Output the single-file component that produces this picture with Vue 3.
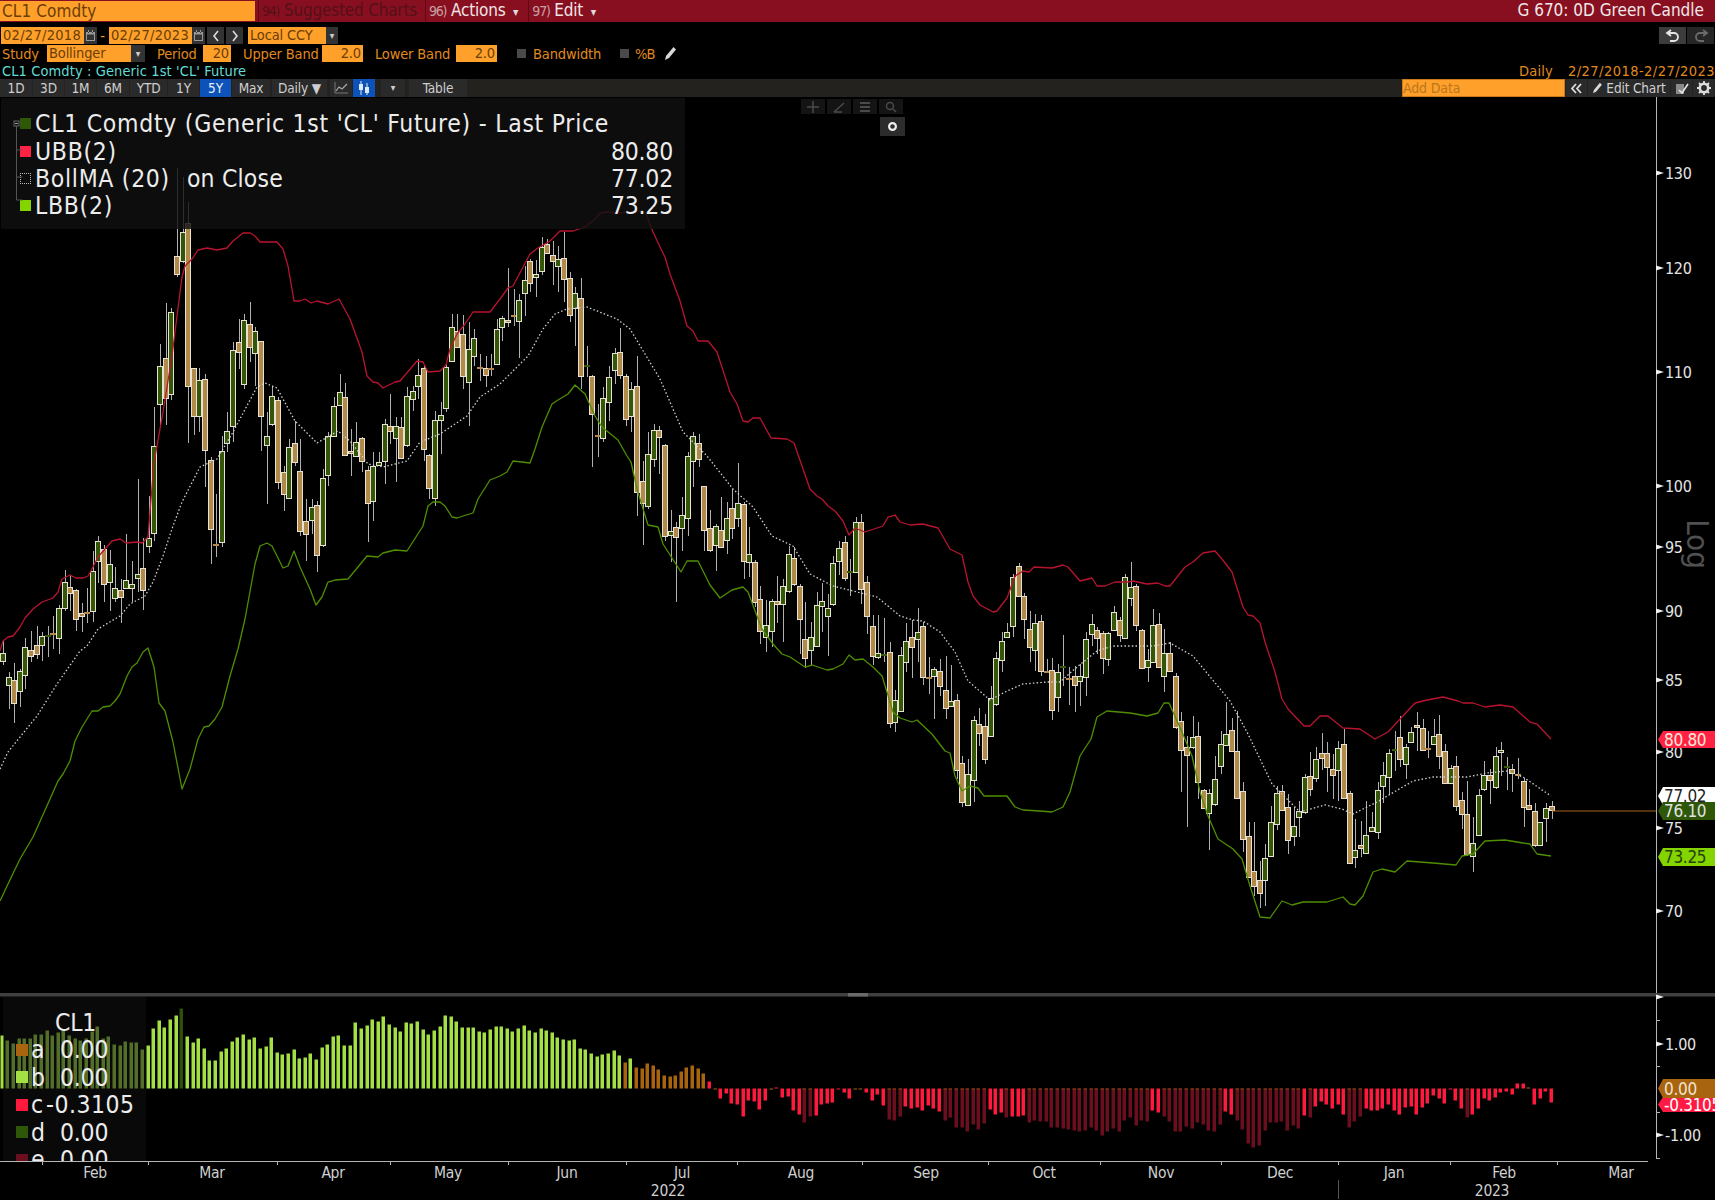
<script setup>
const candleRaw = `g654 662 642 666,g678 686 673 710,b681 704 664 724,g672 692 670 708,g648 676 639 690,b651 657 632 663,b646 655 627 660,g637 646 633 662,g636 637 627 658,b634 635 617 650,g609 639 606 655,g583 609 571 612,b588 594 577 612,b591 620 590 632,b614 617 604 633,b613 614 589 624,g572 612 552 623,g542 562 537 584,b550 585 546 603,g565 583 551 612,g589 599 568 603,b591 598 580 624,g581 589 535 590,g585 589 562 603,g575 579 480 593,b569 591 539 611,g539 547 497 554,g447 534 408 542,g367 405 345 426,b359 399 304 426,g313 395 309 401,b257 275 169 278,g233 262 178 264,b224 387 203 444,b369 417 369 436,g381 417 369 433,b380 451 375 488,b461 530 458 565,b545 546 495 558,g452 543 437 548,g432 444 413 453,g351 427 343 443,b343 353 320 370,g321 385 315 390,b325 348 303 363,g332 354 328 387,b342 417 342 452,g437 446 413 505,g397 425 387 427,b401 483 398 490,b473 495 467 512,g448 499 440 500,b444 463 422 467,b472 532 440 537,b522 535 500 562,g508 521 500 535,b506 556 502 573,g479 546 470 548,g437 476 433 487,g407 437 398 438,g393 406 375 407,b398 456 384 457,b452 454 430 477,g443 457 423 458,b439 462 438 473,b471 504 467 543,g467 502 453 522,g463 466 453 467,g425 462 420 485,b427 432 395 445,g427 439 418 483,b428 459 418 459,g397 446 388 448,g392 400 387 412,g376 387 360 400,b369 450 367 462,b456 489 455 500,g421 499 412 507,g416 421 403 455,g368 409 363 413,g328 362 315 363,b332 348 315 348,b335 377 316 390,g350 383 323 427,g339 357 330 367,b368 369 355 382,b369 376 357 388,b369 370 355 377,g330 365 320 365,g319 328 317 342,b321 323 269 328,b316 317 290 327,g301 322 295 359,g281 294 267 317,b262 284 260 293,g275 278 261 298,g248 272 238 276,b245 254 240 255,b256 262 242 286,g260 267 247 293,b259 280 233 303,b279 316 273 323,g294 309 288 347,b299 377 279 390,g366 367 347 378,b377 415 376 468,b436 437 405 458,g399 439 388 443,g378 403 367 422,g354 371 349 385,b353 376 329 380,b377 420 375 427,g390 417 383 433,b387 493 357 517,b482 504 462 546,g455 507 433 510,g431 460 425 468,b431 438 427 475,b446 537 445 542,g532 536 511 563,b528 538 523 603,g516 529 498 552,g457 519 453 537,g437 462 433 488,b444 460 435 468,b487 531 487 552,b529 551 511 553,g527 546 525 572,b531 548 498 549,g519 541 503 555,b509 529 490 540,g504 519 464 528,b505 562 503 580,g555 563 528 578,b563 603 561 608,b600 632 587 645,g626 638 601 653,g602 632 600 648,b602 605 577 624,g587 605 580 643,g555 592 547 594,b559 585 548 587,b587 620 585 655,b640 659 603 669,g638 651 623 667,g606 647 593 647,g602 607 584 633,g609 617 595 657,g564 605 557 607,g549 562 542 576,b543 579 537 582,g572 573 560 597,g523 573 518 573,b523 590 515 605,b583 617 577 635,b627 657 616 666,g654 658 616 660,g655 656 619 663,b653 724 643 729,g701 723 691 733,g656 712 648 712,g642 663 624 673,b638 648 621 679,g633 640 609 663,b627 678 623 686,b678 679 658 695,g670 677 668 720,b672 687 660 697,b691 709 657 720,g702 707 666 708,b701 771 695 780,b764 803 757 808,g775 806 760 807,g721 781 717 803,b725 734 709 747,b727 760 715 765,g699 737 687 738,g659 705 653 707,g642 661 633 673,g633 638 624 638,g578 627 575 638,b567 597 564 597,b597 620 594 640,b630 648 612 663,g624 651 615 672,b622 672 616 677,b672 673 660 673,b671 711 659 721,g673 698 665 713,g667 668 636 687,b679 680 668 706,b677 686 667 713,g677 682 665 707,g640 678 633 697,g625 635 615 647,b631 639 628 655,b634 659 632 675,g634 660 633 667,g613 631 607 632,b621 636 618 643,g578 639 575 640,g588 599 563 607,b587 626 585 632,b631 669 630 670,g661 668 650 683,g626 663 610 663,b625 668 614 668,g654 677 630 693,b654 672 643 673,b677 728 674 730,b722 751 713 793,b748 756 737 828,g738 748 717 750,b737 783 723 800,b791 809 790 810,g794 814 790 851,g780 805 757 807,g745 767 732 775,g735 746 703 747,b731 752 719 753,b752 799 712 800,b792 840 783 853,b837 878 823 878,b872 887 823 897,b881 894 862 909,g859 881 845 907,g823 857 807 857,g794 825 787 831,b792 811 786 812,b808 841 795 855,g827 837 808 847,g812 818 802 838,g778 813 775 815,b777 790 753 797,g760 779 748 783,b754 759 734 771,b754 768 743 793,b770 776 755 800,g749 771 742 802,b745 799 730 800,b794 864 792 865,g851 858 820 869,b846 849 822 858,g836 854 802 855,g828 832 813 833,g791 833 783 840,g776 787 763 804,g754 778 750 796,g750 751 732 772,b738 760 717 768,g748 765 745 780,g733 743 728 744,b726 728 713 752,b729 751 720 752,b749 750 732 759,g737 745 720 745,b735 757 716 770,b752 784 745 785,g769 784 766 785,b767 807 757 812,b801 815 793 830,b815 855 782 857,g844 857 818 873,g796 836 790 837,g776 790 762 792,b776 781 770 805,g757 788 748 790,g751 753 743 777,g767 768 758 791,b770 774 765 793,b775 776 759 780,b782 808 779 828,b806 810 790 811,b812 846 804 848,g823 846 823 847,g809 819 804 843,b807 811 802 820`

const stepX = 5.611
const candles = candleRaw.split(',').map((s, i) => {
  const [t, b, wt, wb] = s.slice(1).split(' ').map(Number)
  const x = Math.round(3 + i * stepX)
  return { key: i, x, green: s[0] === 'g', t, b, wt, wb, dash: b - t <= 1.5 }
})

const ubb = '0,652 3,642 8,638 13,637 20,628 25,619 33,610 42,603 53,599 58,593 62,580 70,576 76,579 83,579 88,577 93,568 98,558 105,550 112,542 120,540 126,544 137,543 142,544 148,538 154,463 157,447 163,413 172,357 177,317 182,278 185,267 192,260 198,251 207,249 217,251 227,249 233,242 243,234 250,234 255,237 260,243 277,243 283,250 288,267 294,302 300,302 305,300 311,304 317,302 328,305 339,300 350,320 362,353 367,377 373,383 378,384 383,389 395,383 400,382 417,362 423,363 428,373 440,372 446,366 450,350 457,335 465,325 473,313 490,313 500,300 508,289 513,287 522,270 530,255 538,249 550,242 560,232 573,232 585,228 595,220 600,214 607,213 620,214 640,212 646,214 648,220 653,233 660,248 665,258 670,275 680,302 687,327 693,332 698,342 708,342 717,353 730,393 737,405 743,422 748,423 753,419 760,419 771,439 787,440 794,444 802,467 810,490 817,497 822,500 828,507 835,512 843,522 849,536 855,529 865,533 883,527 888,518 895,516 900,523 910,526 923,525 938,529 950,550 962,556 968,583 973,597 980,606 993,613 997,612 1007,599 1015,577 1023,572 1029,573 1034,568 1052,569 1063,566 1068,568 1080,582 1092,579 1097,587 1105,587 1115,583 1128,583 1133,582 1147,585 1158,584 1165,587 1170,587 1185,568 1193,563 1203,554 1215,552 1222,560 1232,573 1243,608 1248,616 1253,617 1260,624 1265,643 1275,673 1282,700 1288,710 1304,727 1310,727 1320,717 1328,717 1343,729 1360,730 1375,740 1388,733 1415,704 1427,701 1443,698 1458,702 1463,704 1473,704 1485,708 1500,706 1513,708 1530,723 1537,725 1551,740'
const lbb = '0,902 8,885 20,860 33,838 50,800 58,782 63,775 70,762 75,742 82,728 92,712 98,712 103,708 110,707 115,702 120,695 127,677 132,668 137,664 143,653 148,649 154,668 159,704 165,712 173,743 182,790 190,770 198,740 204,728 209,727 215,720 222,708 230,677 238,650 245,620 255,565 260,547 267,544 272,547 283,569 288,567 294,552 300,568 310,590 316,606 322,598 328,583 335,581 348,580 358,568 367,557 378,558 383,554 395,551 407,552 423,527 428,507 433,503 440,503 445,507 452,518 457,519 463,517 473,514 478,500 490,481 500,477 507,473 513,462 530,464 535,450 542,428 552,405 558,401 568,395 575,386 585,395 595,417 602,428 618,441 627,457 631,463 637,490 648,526 658,528 663,545 681,573 687,562 698,562 710,586 720,599 732,591 743,588 748,593 757,617 762,630 773,645 782,655 790,658 805,668 812,666 827,671 833,670 843,665 849,656 855,661 863,660 873,668 882,677 887,693 893,713 900,719 912,723 917,721 932,735 945,752 950,754 955,777 962,792 970,787 978,789 984,797 1007,797 1015,808 1023,811 1040,812 1052,813 1063,808 1070,793 1080,757 1091,740 1097,718 1107,712 1130,714 1147,717 1158,714 1164,704 1169,704 1182,733 1192,757 1200,793 1208,817 1218,840 1233,850 1242,860 1250,887 1260,918 1270,919 1282,902 1292,906 1303,903 1327,903 1343,898 1350,905 1355,906 1363,897 1373,873 1382,870 1395,873 1407,862 1433,864 1456,866 1462,857 1473,855 1485,842 1505,841 1523,844 1530,845 1537,855 1551,857'
const boll = '0,770 8,753 37,717 57,685 80,652 87,647 98,630 120,617 130,605 145,597 153,583 163,557 173,527 182,503 200,468 217,460 233,433 257,388 265,384 277,389 295,422 317,444 338,432 350,442 368,465 383,468 407,462 420,443 440,435 467,417 480,398 500,385 528,357 543,330 555,315 567,310 587,308 617,320 630,330 660,380 683,433 707,457 733,490 753,508 772,537 793,547 810,575 833,587 877,598 900,617 913,621 923,622 940,633 955,653 968,682 990,701 1007,692 1023,685 1047,683 1060,683 1077,668 1097,652 1113,647 1153,647 1170,644 1193,657 1230,702 1247,733 1272,785 1300,813 1325,806 1342,810 1353,815 1377,803 1413,782 1433,778 1467,778 1487,774 1507,772 1523,778 1551,797'

const histVals = [53,48,45,50,50,50,54,54,58,53,56,58,53,50,48,50,57,62,50,52,44,43,47,46,46,39,43,60,68,61,69,73,80,52,46,50,40,28,28,37,40,47,51,54,49,51,40,42,51,36,34,35,39,30,31,35,29,41,44,52,53,43,43,66,60,63,69,67,72,64,61,57,66,65,67,59,54,58,62,73,72,67,61,61,61,57,56,59,62,62,60,57,60,63,58,56,60,58,56,51,49,48,49,40,39,35,32,34,35,38,33,26,30,21,20,25,23,19,13,12,13,17,21,23,20,15,7,-1,-10,-5,-15,-16,-28,-12,-13,-21,-12,-1,1,-9,-8,-22,-26,-34,-28,-27,-16,-15,-14,-1,-4,-10,-1,-1,-4,-12,-6,-17,-31,-32,-28,-18,-20,-19,-22,-17,-20,-23,-32,-29,-39,-39,-43,-36,-41,-35,-21,-26,-24,-29,-28,-28,-27,-34,-32,-33,-33,-39,-39,-40,-41,-42,-43,-42,-39,-42,-47,-43,-40,-43,-32,-29,-37,-32,-33,-22,-24,-28,-33,-43,-43,-38,-40,-34,-36,-42,-43,-36,-23,-26,-32,-41,-55,-59,-57,-42,-34,-34,-33,-42,-37,-40,-27,-29,-18,-13,-16,-20,-16,-26,-39,-33,-28,-20,-22,-22,-20,-16,-22,-26,-19,-18,-26,-19,-15,-7,-10,-15,-1,-12,-20,-29,-26,-20,-10,-12,-9,-4,-3,-6,5,5,0,-16,-10,-3,-14]
const darkRanges = [[143,144],[158,160],[168,175],[179,179],[183,204],[207,217],[220,231],[233,233],[240,242],[261,261]]
const isDark = (i) => darkRanges.some(([a, b]) => i >= a && i <= b)
const base = 1089.5
const hist = histVals.map((v, i) => {
  let color = '#a3df45'
  if (i === 32) color = '#2e4f08'
  else if (i === 111 || (i >= 113 && i <= 125)) color = '#a9640f'
  else if (i >= 126) {
    if (isDark(i)) color = '#6b0e1e'
    else if (Math.abs(v) <= 1 && i !== 138 && i !== 149 && i !== 258) color = '#a9640f'
    else color = '#ff1a3d'
  }
  const h = Math.max(Math.abs(v), 1)
  return {
    key: i,
    x: Math.round(1.7 + i * 5.613) - 1.5,
    y: v >= 0 ? base - h : base,
    h,
    color,
    cap: isDark(i),
  }
})

const priceLabels = [
  ['130', 174], ['120', 269], ['110', 373], ['100', 487], ['95', 548], ['90', 612],
  ['85', 681], ['80', 753], ['75', 829], ['70', 912],
]
const lowerLabels = [['1.00', 1045], ['-1.00', 1136]]
const majorTicks = [174, 269, 373, 487, 548, 612, 681, 753, 829, 912, 998, 1045, 1136]
const minorTicks = [1021, 1067, 1113, 1159]
const xTicks = [42, 148, 277, 390, 508, 626, 737, 862, 988, 1100, 1221, 1338, 1450, 1557]
const months = [
  ['Feb', 95], ['Mar', 212], ['Apr', 333], ['May', 448], ['Jun', 567], ['Jul', 682],
  ['Aug', 801], ['Sep', 926], ['Oct', 1044], ['Nov', 1161], ['Dec', 1280], ['Jan', 1394],
  ['Feb', 1504], ['Mar', 1621],
]
const tags = [
  { text: '80.80', top: 732, h: 17, bg: '#ff2244', fg: '#ffe9d8' },
  { text: '77.02', top: 788, h: 18, bg: '#ffffff', fg: '#222' },
  { text: '73.25', top: 849, h: 18, bg: '#84d400', fg: '#27410a' },
  { text: '76.10', top: 803, h: 18, bg: '#2f5708', fg: '#e3e3e3' },
  { text: '-0.3105', top: 1098, h: 15, bg: '#ff1a44', fg: '#fff' },
  { text: '0.00', top: 1080, h: 19, bg: '#a9640f', fg: '#f0e4d0' },
]
const tagPoints = (t) => {
  const m = t.top + t.h / 2
  return `1658,${m} 1663,${t.top} 1715,${t.top} 1715,${t.top + t.h} 1663,${t.top + t.h}`
}
const tools = [
  { t: '1D', w: 32 }, { t: '3D', w: 31 }, { t: '1M', w: 31 }, { t: '6M', w: 32 },
  { t: 'YTD', w: 37 }, { t: '1Y', w: 31 }, { t: '5Y', w: 31, on: true }, { t: 'Max', w: 38 },
]
const lowerRows = [
  { k: 'a', v: '0.00', c: '#a9640f' },
  { k: 'b', v: '0.00', c: '#a3df45' },
  { k: 'c', v: '-0.3105', c: '#ff1a3d', neg: true },
  { k: 'd', v: '0.00', c: '#2f5708' },
  { k: 'e', v: '0.00', c: '#6b0e1e' },
]
</script>

<template>
  <div class="page">
    <header class="titlebar">
      <div class="security">CL1 Comdty</div>
      <div class="menu dim"><i>94)</i> Suggested Charts</div>
      <div class="menu"><i>96)</i> Actions <b>▾</b></div>
      <div class="menu"><i>97)</i> Edit <b>▾</b></div>
      <div class="spacer"></div>
      <div class="page-name">G 670: 0D Green Candle</div>
    </header>

    <div class="row row-dates">
      <span class="input date">02/27/2018</span>
      <span class="cal"><svg width="9" height="11" viewBox="0 0 9 11"><path d="M0 2h9v9H0z M1 4.5v5.5h7V4.5z M2 0h1v3H2z M6 0h1v3H6z" fill="#9a9a9a" fill-rule="evenodd"/></svg></span>
      <span class="dash">-</span>
      <span class="input date">02/27/2023</span>
      <span class="cal"><svg width="9" height="11" viewBox="0 0 9 11"><path d="M0 2h9v9H0z M1 4.5v5.5h7V4.5z M2 0h1v3H2z M6 0h1v3H6z" fill="#9a9a9a" fill-rule="evenodd"/></svg></span>
      <span class="nav"><svg width="8" height="12" viewBox="0 0 8 12"><path d="M6 1 2 6l4 5" fill="none" stroke="#ddd" stroke-width="1.6"/></svg></span>
      <span class="nav"><svg width="8" height="12" viewBox="0 0 8 12"><path d="M2 1l4 5-4 5" fill="none" stroke="#ddd" stroke-width="1.6"/></svg></span>
      <span class="input ccy">Local CCY</span>
      <span class="drop">▾</span>
      <span class="spacer"></span>
      <span class="undo"><svg width="16" height="14" viewBox="0 0 16 14"><path d="M6 1 2 4l4 3M2 4h7a4 4 0 0 1 0 8H5" fill="none" stroke="#e6e6e6" stroke-width="1.8"/></svg></span>
      <span class="undo off"><svg width="16" height="14" viewBox="0 0 16 14"><path d="M10 1l4 3-4 3M14 4H7a4 4 0 0 0 0 8h4" fill="none" stroke="#6a6a6a" stroke-width="1.8"/></svg></span>
    </div>

    <div class="row row-study">
      <span class="lbl study">Study</span>
      <span class="input boll">Bollinger</span>
      <span class="drop study-drop">▾</span>
      <span class="lbl period">Period</span>
      <span class="input num n20">20</span>
      <span class="lbl upper">Upper Band</span>
      <span class="input num n2">2.0</span>
      <span class="lbl lower">Lower Band</span>
      <span class="input num n2">2.0</span>
      <span class="check first"></span>
      <span class="lbl">Bandwidth</span>
      <span class="check second"></span>
      <span class="lbl pct">%B</span>
      <svg class="pencil" width="13" height="15" viewBox="0 0 13 15"><path d="M9.5 1 12 3.5 5 12 1 14l1-4z" fill="#d8d8d8"/></svg>
    </div>

    <div class="row row-info">
      <span class="cyan">CL1 Comdty : Generic 1st 'CL' Future</span>
      <span class="spacer"></span>
      <span class="info-r daily">Daily</span>
      <span class="info-r range">2/27/2018-2/27/2023</span>
    </div>

    <div class="toolbar">
      <span v-for="b in tools" :key="b.t" class="tbtn" :class="{ on: b.on }" :style="{ width: b.w + 'px' }">{{ b.t }}</span>
      <span class="tbtn daily-btn">Daily ▼</span>
      <span class="tbtn icon-btn line-btn"><svg width="14" height="12" viewBox="0 0 14 12"><path d="M1 0v11h13" fill="none" stroke="#777" stroke-width="1"/><path d="M2 9l3-4 3 2 5-5" fill="none" stroke="#aaa" stroke-width="1.2"/></svg></span>
      <span class="tbtn icon-btn active"><svg width="14" height="14" viewBox="0 0 14 14"><path d="M4 0v14M10 2v12" stroke="#dfe8f5" stroke-width="1"/><rect x="2" y="3" width="4" height="6" fill="#dfe8f5"/><rect x="8" y="6" width="4" height="6" fill="#dfe8f5"/></svg></span>
      <span class="tbtn chart-drop">▾</span>
      <span class="tbtn table-btn">Table</span>
      <span class="spacer"></span>
      <span class="add-data">Add Data</span>
      <span class="tbtn collapse"><svg width="13" height="11" viewBox="0 0 13 11"><path d="M6 1 2 5.5 6 10M11 1 7 5.5 11 10" fill="none" stroke="#ddd" stroke-width="1.8"/></svg></span>
      <span class="tbtn edit-chart"><svg width="11" height="12" viewBox="0 0 13 15"><path d="M9.5 1 12 3.5 5 12 1 14l1-4z" fill="#d8d8d8"/></svg>Edit Chart</span>
      <span class="tbtn square"><svg width="14" height="13" viewBox="0 0 14 13"><path d="M1 2h8v10H1z" fill="#8a8a8a"/><path d="M4 8l3 3 6-9" fill="none" stroke="#e6e6e6" stroke-width="1.6"/></svg></span>
      <span class="tbtn square"><svg width="14" height="14" viewBox="0 0 14 14"><circle cx="7" cy="7" r="4.2" fill="none" stroke="#ddd" stroke-width="2.6"/><path d="M7 0v3M7 11v3M0 7h3M11 7h3M2 2l2 2M10 10l2 2M2 12l2-2M10 4l2-2" stroke="#ddd" stroke-width="1.8"/></svg></span>
    </div>

    <main class="chart">
      <svg class="plot" width="1715" height="1102" viewBox="0 98 1715 1102">
        <!-- candles -->
        <g v-for="c in candles" :key="c.key">
          <line :x1="c.x + 0.5" :x2="c.x + 0.5" :y1="c.wt" :y2="c.wb" class="wick" />
          <rect v-if="c.dash" :x="c.x - 3" :y="c.t" width="6" height="2" :fill="c.green ? '#355a08' : '#b5894a'" />
          <rect v-else :x="c.x - 2.5" :y="c.t + 0.5" width="5" :height="c.b - c.t" :fill="c.green ? '#335707' : '#b18a4a'" class="body" />
        </g>
        <polyline :points="ubb" class="ln-ubb" />
        <polyline :points="lbb" class="ln-lbb" />
        <polyline :points="boll" class="ln-boll" />
        <line x1="1552" x2="1656" y1="812" y2="812" class="ln-last" />

        <!-- histogram -->
        <rect v-for="b in hist" :key="b.key" :x="b.x" :y="b.y" width="3.5" :height="b.h" :fill="b.color" />
        <g v-for="b in hist" :key="'c' + b.key">
          <rect v-if="b.cap" :x="b.x" :y="base" width="3.5" height="1" fill="#8a4a10" />
        </g>

        <!-- panel divider and axes -->
        <rect x="0" y="994" width="1715" height="3.5" fill="#404040" />
        <rect x="848" y="994" width="20" height="3.5" fill="#6a6a6a" />
        <line x1="1656.5" x2="1656.5" y1="98" y2="994" class="axis" />
        <line x1="1656.5" x2="1656.5" y1="997" y2="1159" class="axis" />
        <line x1="0" x2="1648" y1="1162.5" y2="1162.5" class="axis" />
        <line v-for="x in xTicks" :key="x" :x1="x + 0.5" :x2="x + 0.5" y1="1162" y2="1166" class="axis" />
        <line x1="1338.5" x2="1338.5" y1="1181" y2="1200" class="sep" />
        <polygon v-for="y in majorTicks" :key="y" :points="`1656,${y - 2.5} 1664,${y} 1656,${y + 2.5}`" fill="#eee" />
        <line v-for="y in minorTicks" :key="y" x1="1656" x2="1660" :y1="y + 0.5" :y2="y + 0.5" class="axis" />

        <text v-for="l in priceLabels" :key="l[0]" x="1665" :y="l[1] + 6" class="ax">{{ l[0] }}</text>
        <text v-for="l in lowerLabels" :key="l[0]" x="1665" :y="l[1] + 6" class="ax">{{ l[0] }}</text>
        <text v-for="(m, i) in months" :key="i" :x="m[1]" y="1179" text-anchor="middle" class="ax mon">{{ m[0] }}</text>
        <text x="668" y="1197" text-anchor="middle" class="ax mon">2022</text>
        <text x="1492" y="1197" text-anchor="middle" class="ax mon">2023</text>
        <text class="log" transform="translate(1687 545) rotate(90)" text-anchor="middle">Log</text>

        <g v-for="t in tags" :key="t.text">
          <polygon :points="tagPoints(t)" :fill="t.bg" />
          <text x="1664" :y="t.top + t.h / 2 + 6" :fill="t.fg" class="tag">{{ t.text }}</text>
        </g>
      </svg>

      <div class="legend">
        <svg class="tree" width="20" height="100" viewBox="0 0 20 100"><path d="M7.5 14V90M7.5 40h6M7.5 67h6M7.5 90h6" fill="none" stroke="#555"/><rect x="5" y="11" width="5" height="5" fill="#111" stroke="#666"/><path d="M6 13.5h3" stroke="#999"/></svg>
        <div class="lg-row title"><span class="sw" style="background:#2f5708"></span>CL1 Comdty (Generic 1st 'CL' Future) - Last Price</div>
        <div class="lg-row"><span class="sw" style="background:#ff2244"></span>UBB(2)<span class="val">80.80</span></div>
        <div class="lg-row"><span class="sw dotted"></span>BollMA (20)<span class="on-close">on Close</span><span class="val">77.02</span></div>
        <div class="lg-row"><span class="sw" style="background:#84d400"></span>LBB(2)<span class="val">73.25</span></div>
      </div>

      <div class="mini-tools">
        <span><svg width="12" height="12" viewBox="0 0 12 12"><path d="M6 0v12M0 6h12" stroke="#4a4a4a" stroke-width="1.5"/></svg></span>
        <span><svg width="12" height="12" viewBox="0 0 12 12"><path d="M1 11 11 2M1 11h8" stroke="#4a4a4a" stroke-width="1.5" fill="none"/></svg></span>
        <span><svg width="12" height="12" viewBox="0 0 12 12"><path d="M1 2h10M1 6h10M1 10h10" stroke="#4a4a4a" stroke-width="2"/></svg></span>
        <span><svg width="12" height="12" viewBox="0 0 12 12"><circle cx="5" cy="5" r="3.5" fill="none" stroke="#4a4a4a" stroke-width="1.5"/><path d="M8 8l3 3" stroke="#4a4a4a" stroke-width="1.5"/></svg></span>
      </div>
      <div class="cam"><svg width="11" height="11" viewBox="0 0 11 11"><circle cx="5.5" cy="5.5" r="3.4" fill="none" stroke="#eee" stroke-width="2.2"/></svg></div>

      <div class="legend-low">
        <div class="low-name">CL1</div>
        <div v-for="r in lowerRows" :key="r.k" class="low-row">
          <span class="low-sw" :style="{ background: r.c }"></span>
          <span class="low-k">{{ r.k }}</span>
          <span class="low-v" :class="{ neg: r.neg }">{{ r.v }}</span>
        </div>
      </div>
    </main>
  </div>
</template>

<style scoped>
.page {
  width: 1715px;
  height: 1200px;
  background: #000;
  display: flex;
  flex-direction: column;
  overflow: hidden;
  font-family: "DejaVu Sans Condensed", "DejaVu Sans", sans-serif;
  font-stretch: condensed;
  color: #e0e0e0;
}
.spacer { flex: 1; }
.titlebar {
  height: 22px;
  background: #880f20;
  display: flex;
  align-items: stretch;
  font-size: 17px;
  flex: none;
  white-space: nowrap;
}
.security {
  width: 255px;
  box-sizing: border-box;
  background: #ffa02a;
  color: #6a3d05;
  padding-left: 2px;
  line-height: 20px;
  margin: 1px 0;
  letter-spacing: 0.1px;
}
.menu {
  padding: 0 9px 0 3px;
  line-height: 21px;
  color: #f0e6e6;
  border-left: 1px solid #5a0a14;
  letter-spacing: -0.2px;
  margin-right: 1px;
}
.menu i { font-style: normal; color: #c9a0a4; font-size: 14px; letter-spacing: -1.2px; }
.menu b { font-weight: normal; font-size: 12px; color: #ddd; margin-left: 3px; }
.menu.dim {
  width: 166px;
  color: #541019;
  box-sizing: border-box;
  margin-left: 3px;
  overflow: hidden;
}
.menu.dim i { color: #541019; }
.page-name { line-height: 21px; padding-right: 11px; color: #f0e8e8; letter-spacing: 0; }

.row {
  display: flex;
  align-items: center;
  font-size: 14.5px;
  flex: none;
  letter-spacing: -0.15px;
  white-space: nowrap;
}
.row-dates { height: 17px; margin-top: 5px; }
.row-study { height: 17px; margin-top: 1px; }
.row-info { height: 16px; margin-top: 1px; }
.input {
  background: #ffa02a;
  color: #6a3d05;
  line-height: 17px;
  height: 17px;
  box-sizing: border-box;
  display: block;
}
.date { width: 83px; padding-left: 2px; margin-left: 1px; letter-spacing: 0.28px; overflow: hidden; }
.cal {
  width: 13px;
  height: 17px;
  background: #333;
  display: flex;
  align-items: center;
  justify-content: center;
}
.dash { width: 11px; text-align: center; color: #ffa02a; }
.nav {
  width: 17px;
  height: 17px;
  background: #333;
  display: flex;
  align-items: center;
  justify-content: center;
  margin-left: 2px;
}
.ccy { width: 78px; padding-left: 2px; margin-left: 5px; }
.drop {
  width: 12px;
  height: 17px;
  background: #333;
  color: #ccc;
  font-size: 10px;
  line-height: 17px;
  text-align: center;
}
.undo {
  width: 27px;
  height: 17px;
  background: #3c3c3c;
  display: flex;
  align-items: center;
  justify-content: center;
  margin-right: 1px;
}
.undo.off { background: #262626; }
.lbl { color: #e08a1e; }
.study { margin-left: 2px; width: 45px; }
.boll { width: 84px; padding-left: 2px; }
.study-drop { width: 14px; }
.period { margin-left: 12px; width: 46px; }
.num { text-align: right; padding-right: 2px; }
.n20 { width: 28px; }
.upper { margin-left: 12px; width: 79px; }
.n2 { width: 41px; }
.lower { margin-left: 12px; width: 81px; }
.check { width: 9px; height: 9px; background: #4a4a4a; margin-right: 6px; }
.check.first { margin-left: 20px; margin-right: 7px; }
.check.second { margin-left: 19px; }
.pct { letter-spacing: -1px; }
.pencil { margin-left: 10px; }
.cyan { color: #62dcd4; margin-left: 2px; letter-spacing: 0.1px; }
.info-r { color: #e08a1e; }
.daily { margin-right: 15px; letter-spacing: 0.2px; }
.range { letter-spacing: 0.45px; }

.toolbar {
  height: 18px;
  background: #23221e;
  display: flex;
  align-items: stretch;
  font-size: 13.5px;
  flex: none;
  letter-spacing: -0.15px;
  white-space: nowrap;
}
.tbtn {
  background: #2a2a2a;
  color: #cfcfcf;
  margin-right: 1px;
  line-height: 18px;
  text-align: center;
  box-sizing: border-box;
  display: block;
}
.tbtn.on { background: #0c52b8; color: #e6eefa; }
.daily-btn { width: 55px; margin-left: 1px; }
.icon-btn { width: 22px; display: flex; align-items: center; justify-content: center; }
.line-btn { margin-left: 2px; }
.icon-btn.active { background: #0c52b8; }
.chart-drop { width: 24px; margin-left: 5px; font-size: 10px; }
.table-btn { width: 58px; margin-left: 3px; }
.add-data {
  width: 163px;
  box-sizing: border-box;
  background: #ffa02a;
  border: 1px solid #c9781a;
  color: #b9761c;
  line-height: 16px;
  padding-left: 0;
  font-size: 14px;
}
.collapse { width: 21px; margin-left: 1px; display: flex; align-items: center; justify-content: center; }
.edit-chart {
  width: 82px;
  display: flex;
  align-items: center;
  justify-content: center;
  gap: 3px;
}
.square { width: 21px; display: flex; align-items: center; justify-content: center; }

.chart { position: relative; flex: 1; }
.plot { display: block; }
.wick { stroke: #b0b0b0; stroke-width: 1; }
.body { stroke: #e8e2d4; stroke-width: 1; }
.ln-ubb { fill: none; stroke: #b8142f; stroke-width: 1.3; stroke-linejoin: round; }
.ln-lbb { fill: none; stroke: #4f8e00; stroke-width: 1.3; stroke-linejoin: round; }
.ln-boll { fill: none; stroke: #cfcfcf; stroke-width: 1.3; stroke-dasharray: 1.5 2.2; }
.ln-last { stroke: #a8651a; stroke-width: 1; }
.axis { stroke: #b5b5b5; stroke-width: 1; }
.sep { stroke: #555; stroke-width: 1; }
.ax { font-size: 16px; fill: #e4e4e4; font-family: "DejaVu Sans Condensed", "DejaVu Sans", sans-serif; font-stretch: condensed; letter-spacing: -0.3px; }
.mon { font-size: 15.5px; fill: #cfcfcf; }
.tag { font-size: 17px; font-family: "DejaVu Sans Condensed", "DejaVu Sans", sans-serif; font-stretch: condensed; letter-spacing: -0.3px; }
.log { font-size: 31px; fill: #505050; font-family: "DejaVu Sans Condensed", "DejaVu Sans", sans-serif; font-stretch: condensed; }

.legend {
  position: absolute;
  left: 1px;
  top: 1px;
  width: 684px;
  height: 131px;
  box-sizing: border-box;
  padding: 12px 12px 0 18px;
  background: rgba(16, 16, 16, 0.82);
  font-size: 24.5px;
  color: #ececec;
  letter-spacing: 0.7px;
}
.tree { position: absolute; left: 8px; top: 12px; }
.lg-row {
  display: flex;
  align-items: center;
  height: 27.4px;
  white-space: pre;
}
.title { letter-spacing: 0.74px; }
.sw { width: 11px; height: 11px; margin-right: 4px; margin-left: 1px; flex: none; }
.sw.dotted { border: 1px dotted #bbb; box-sizing: border-box; }
.on-close { margin-left: 17px; letter-spacing: 0.2px; }
.val { margin-left: auto; letter-spacing: -0.2px; }
.mini-tools {
  position: absolute;
  left: 801px;
  top: 2px;
  display: flex;
  gap: 2px;
}
.mini-tools span {
  width: 24px;
  height: 15px;
  background: #141414;
  display: flex;
  align-items: center;
  justify-content: center;
}
.cam {
  position: absolute;
  left: 880px;
  top: 20px;
  width: 25px;
  height: 19px;
  background: #2c2c2c;
  display: flex;
  align-items: center;
  justify-content: center;
}
.legend-low {
  position: absolute;
  left: 3px;
  top: 900px;
  width: 143px;
  height: 164px;
  overflow: hidden;
  background: rgba(16, 16, 16, 0.55);
  font-size: 24.5px;
  color: #ececec;
  padding-top: 12px;
  box-sizing: border-box;
}
.low-name { padding-left: 52px; line-height: 27px; letter-spacing: -0.2px; }
.low-row { display: flex; align-items: center; height: 27.5px; }
.low-sw { width: 12px; height: 12px; margin-left: 13px; margin-right: 3px; flex: none; }
.low-k { width: 18px; }
.low-v { margin-left: 11px; letter-spacing: -0.2px; white-space: nowrap; }
.low-v.neg { margin-left: -3px; letter-spacing: 0.5px; }
</style>
